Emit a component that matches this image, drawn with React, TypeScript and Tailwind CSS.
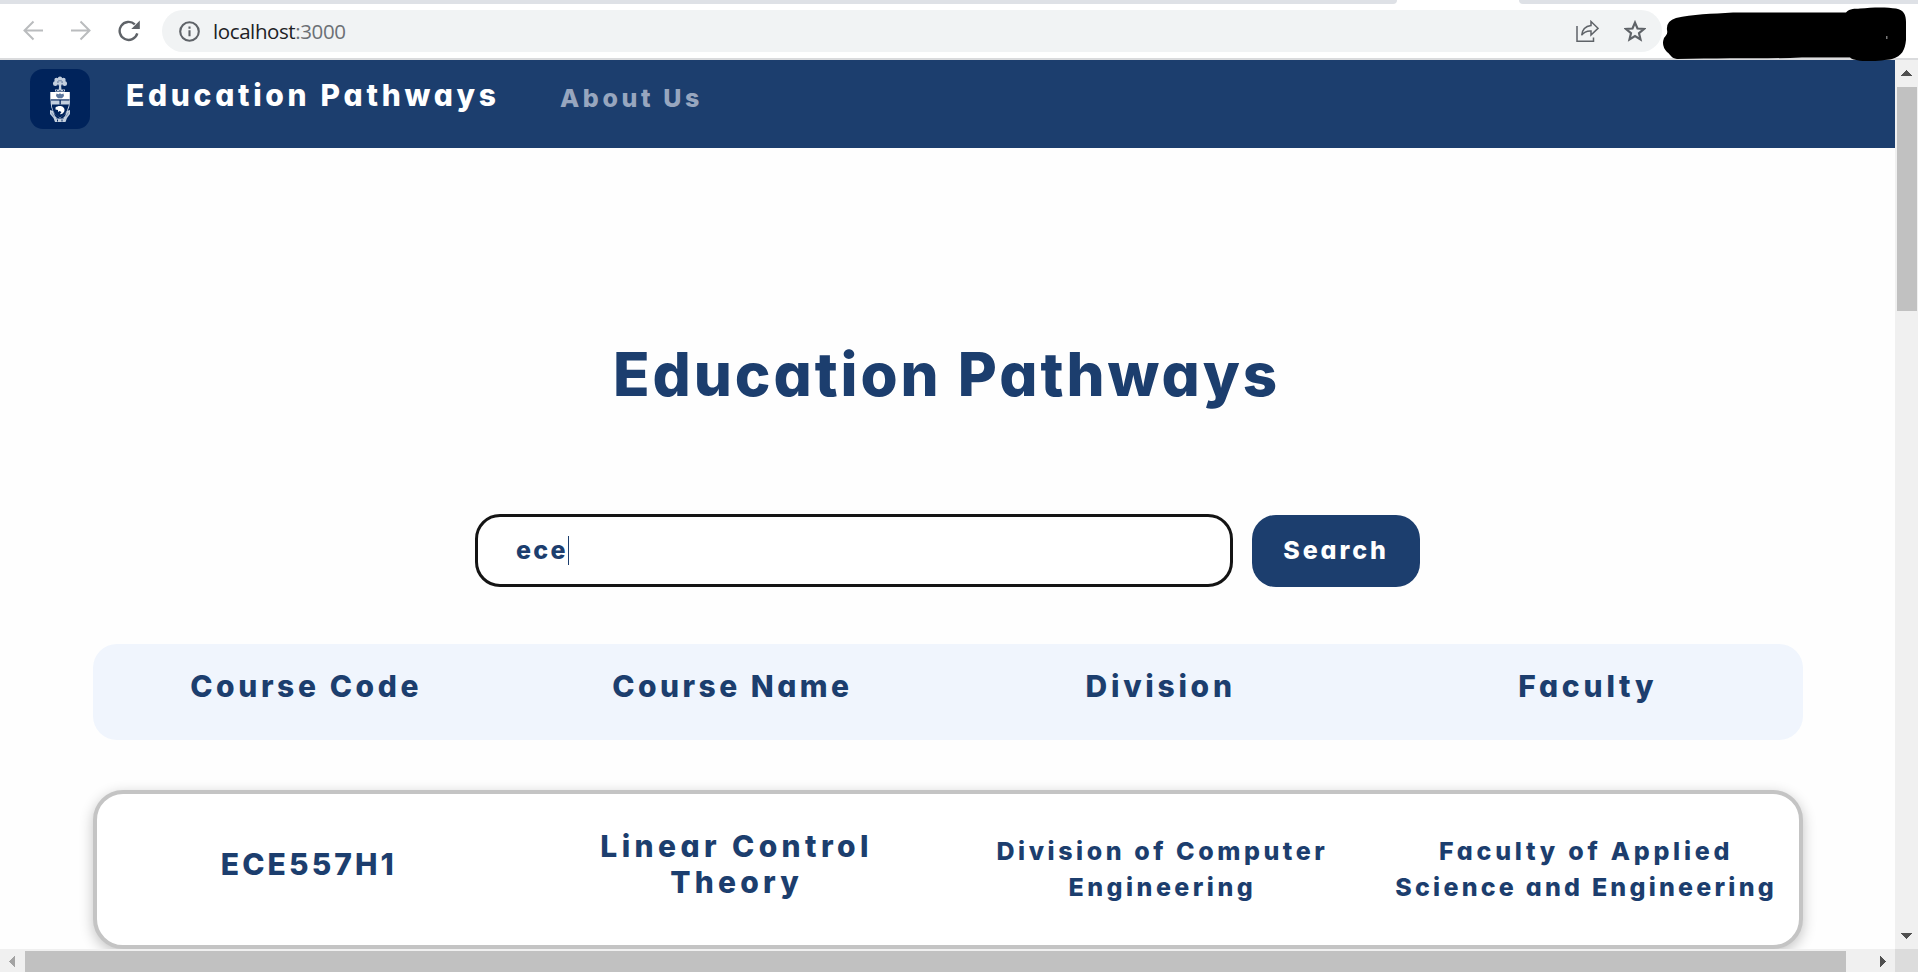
import type { ReactNode } from 'react';

const title = "font-[Inter,sans-serif] font-extrabold [font-feature-settings:'cv11'] whitespace-nowrap";

function BrowserBar() {
  return (
    <div className="relative h-[60px] shrink-0 border-b-2 border-[#dadbdd] bg-white">
      <div className="flex h-1 justify-between">
        <div className="w-[1397px] rounded-br-[6px] bg-[#dee1e6]" />
        <div className="w-[399px] rounded-bl-[6px] bg-[#dee1e6]" />
      </div>
      <div className="mt-[6px] flex h-[42px] items-center">
        <svg className="ml-[22px] h-[22px] w-[22px]" viewBox="0 0 22 22" fill="none" stroke="#babcbe" strokeWidth="2">
          <path d="M21 10.5H2.5M11.5 1.5l-9 9 9 9" />
        </svg>
        <svg className="ml-[26px] h-[22px] w-[22px]" viewBox="0 0 22 22" fill="none" stroke="#babcbe" strokeWidth="2">
          <path d="M1 10.500h18.500M10.500 1.500l9 9-9 9" />
        </svg>
        <svg className="ml-[26px] h-[22px] w-[22px]" viewBox="0 0 22 22" fill="none" stroke="#5f6368" strokeWidth="2.400">
          <path d="M19.300 13.400A9 9 0 1 1 16.800 4.300" />
          <path d="M21.800 0.500v8.500h-8.500z" fill="#5f6368" stroke="none" />
        </svg>
        <div className="ml-[22px] flex h-[42px] w-[1500px] items-center rounded-full bg-[#f1f3f4] pl-[17px]">
          <svg className="h-[21px] w-[21px]" viewBox="0 0 21 21" fill="none" stroke="#5f6368" strokeWidth="2.100">
            <circle cx="10.500" cy="10.500" r="9.300" />
            <path d="M10.500 9.200v6M10.500 5.500v2.200" />
          </svg>
          <span className="ml-[13px] font-['Open_Sans',sans-serif] text-[20.500px] leading-[30px] tracking-[-0.400px] text-[#202124]">
            localhost<span className="text-[#6c7075]">:3000</span>
          </span>
          <svg className="mr-[25px] ml-auto h-[23px] w-[23px]" viewBox="0 0 23 23" fill="none" stroke="#5f6368" strokeWidth="1.500">
            <path d="M1 6v15.200h16.500V17.500" />
            <path d="M15 1.500l7 6.800-7 6.700v-4c-4-.2-7 .8-9.300 4.200C6.200 9.800 9.500 6.200 15 5.500z" />
          </svg>
          <svg className="mr-4 h-[22px] w-[22px]" viewBox="0 0 22 22" fill="none" stroke="#5f6368" strokeWidth="2.200">
            <path d="M11 2.600l2.500 5.900 6.400.5-4.900 4.200 1.500 6.200L11 16.100l-5.500 3.300L7 13.200 2.100 9l6.400-.5z" />
          </svg>
        </div>
      </div>
      <svg className="absolute top-[6px] left-[1662px] z-10 h-[56px] w-[246px]" viewBox="0 0 246 56">
        <path d="M5 24Q4 15 14 12C30 8 50 8 71 6.500H184C188 2 193 3 198 2.500C211 1 226 1 234 2.500C242 4 244 9 244 16V34C243 44 240 50 230 53C220 55 194 57 188 51.500H140C100 53 60 52 15 53C9 52 9 49 5 46Q-1 40 2 32C4 29 6 28 5 24Z" fill="#000" />
        <path d="M224 30h1.500v3h-1.500z" fill="#777" />
      </svg>
    </div>
  );
}

function Crest() {
  return (
    <svg className="h-[60px] w-[60px] rounded-[13px] bg-[#00235b]" viewBox="0 0 60 60">
      <g fill="#c3cfde">
        <circle cx="25.500" cy="14.500" r="2.500" />
        <circle cx="26.500" cy="11" r="2.200" />
        <circle cx="30" cy="9.800" r="2.200" />
        <circle cx="33.500" cy="11" r="2.200" />
        <circle cx="34.500" cy="14.500" r="2.500" />
        <circle cx="30" cy="14" r="2.600" />
        <path d="M29.200 15h1.800l.5 6h-2.800zM25 20.500h10v2h-10z" />
        <path d="M20.500 30.500h19.500c0 6-1 10-4 13.500l-6 5-6-5c-2.500-3.500-3.500-7.500-3.500-13.500z" />
        <path d="M20 41l3 1 2 5 3 3h4l3-3 2-5 3-1v4l-3 4-1.500 4h-10.500L23.500 49 20 45z" />
      </g>
      <path d="M28 12.500v1M32 12.500v1M27 16.500l1-1M33 16.500l-1-1M30 11.500v.8" stroke="#00235b" strokeWidth=".9" />
      <path d="M20.300 23h19.500v7.500H20.300z" fill="#fff" />
      <path d="M26.500 24.500l2 .8 1.500-1 1.500 1 2-.8.500 2.500-2 2.300h-4l-2-2.300z" fill="#5c769c" />
      <g fill="#00235b">
        <path d="M22 35.500h17l-.7 2c-1.500 6-4 9-8.300 11-4.300-2-6.800-5-8-11z" />
        <path d="M21 30.500h18.500v1H21zM29.500 31h1.300v4.500h-1.300z" />
        <path d="M27 50.500h1v2h-1zM31.500 50.500h1v2h-1z" />
        <circle cx="26.500" cy="21.500" r=".6" />
        <circle cx="30" cy="21.500" r=".6" />
        <circle cx="33.500" cy="21.500" r=".6" />
      </g>
      <path d="M25.500 38.500c2-2 6-2 7.500-.5 2 1.500 2 4 .5 5.500-1 1.500-2.500 2-3.500 1.500l1.500-2-2-1-1.500 1v-2l-2.500-.5z" fill="#fff" />
      <path d="M21.500 43.500l2.500 4M38.500 43.500l-2.500 4M26 49.500h8" stroke="#7088a9" strokeWidth=".8" />
    </svg>
  );
}

function Cell({ children, className = '' }: { children: ReactNode; className?: string }) {
  return <div className={`flex flex-1 flex-col items-center leading-9 ${className}`}>{children}</div>;
}

function VerticalScrollbar() {
  return (
    <div className="flex w-[23px] shrink-0 flex-col items-center bg-[#f0f0f0]">
      <svg className="mt-[10px] h-[6px] w-[11px]" viewBox="0 0 11 6" shapeRendering="crispEdges"><path d="M5.500 0L11 6H0z" fill="#505050" /></svg>
      <div className="mt-[11px] h-[224px] w-[20px] bg-[#c1c1c1]" />
      <svg className="mt-auto mb-[10px] h-[6px] w-[11px]" viewBox="0 0 11 6" shapeRendering="crispEdges"><path d="M5.500 6L11 0H0z" fill="#505050" /></svg>
    </div>
  );
}

function HorizontalScrollbar() {
  return (
    <div className="flex h-[23px] shrink-0 items-center bg-[#f0f0f0]">
      <svg className="mt-[2px] ml-[9px] h-[11px] w-[6px]" viewBox="0 0 6 11" shapeRendering="crispEdges"><path d="M0 5.500L6 0V11z" fill="#a3a3a3" /></svg>
      <div className="mt-[2px] ml-[10px] h-[21px] w-[1821px] bg-[#c1c1c1]" />
      <svg className="mt-[2px] ml-[34px] h-[11px] w-[6px]" viewBox="0 0 6 11" shapeRendering="crispEdges"><path d="M6 5.500L0 0V11z" fill="#505050" /></svg>
      <div className="ml-auto h-full w-[23px] bg-[#dcdcdc]" />
    </div>
  );
}

export default function App() {
  return (
    <div className="flex h-[972px] w-[1918px] flex-col overflow-hidden bg-white text-[#1c3e6e]">
      <BrowserBar />
      <div className="flex min-h-0 flex-1">
        <div className="min-w-0 flex-1 overflow-hidden bg-[#fefefe]">
          <nav className="flex h-[88px] items-start bg-[#1c3e6e] pl-[30px]">
            <div className="mt-[9px]"><Crest /></div>
            <span className={`${title} mt-[17px] ml-[36px] w-[434px] text-[30px] leading-9 tracking-[3.700px] text-white`}>Education Pathways</span>
            <span className={`${title} mt-5 text-[25px] leading-9 tracking-[3.600px] text-[#97a6bf]`}>About Us</span>
          </nav>

          <h1 className={`${title} mt-[190px] pl-[613px] text-[60px] leading-[72px] tracking-[2.950px]`}>Education Pathways</h1>

          <div className="mt-[103px] flex h-[74px] items-center pl-[475px]">
            <div className="flex h-[73px] w-[758px] items-center rounded-[25px] border-3 border-[#141414] bg-white pl-[38px]">
              <span className={`${title} w-[52px] text-[25px] leading-9 tracking-[2.300px]`}>ece</span>
              <span className="h-[29px] w-px bg-[#1c3e6e]" />
            </div>
            <button className={`${title} mt-px ml-[19px] h-[72px] w-[168px] rounded-[24px] bg-[#1c3e6e] pb-[2px] text-[25px] leading-9 tracking-[2.900px] text-white`}>Search</button>
          </div>

          <div className={`${title} mt-[57px] ml-[93px] flex h-24 w-[1710px] rounded-[24px] bg-[#f0f5fd] pt-6 text-[30px]`}>
            <Cell className="tracking-[3.600px]">Course Code</Cell>
            <Cell className="pr-[2px] tracking-[3.450px]">Course Name</Cell>
            <Cell className="pr-[1px] tracking-[3.700px]">Division</Cell>
            <Cell className="pr-[2px] tracking-[3.800px]">Faculty</Cell>
          </div>

          <div className={`${title} mt-[50px] ml-[93px] flex h-[159px] w-[1710px] items-center rounded-[30px] border-4 border-[#c4c4c4] bg-white shadow-[0_4px_14px_rgba(0,0,0,0.24)]`}>
            <Cell className="pr-1 pb-[11px] text-[30px] tracking-[3.100px]">ECE557H1</Cell>
            <Cell className="pr-[2px] pb-[11px] text-[30px]">
              <span className="tracking-[4.400px]">Linear Control</span>
              <span className="tracking-[4.200px]">Theory</span>
            </Cell>
            <Cell className="pb-[1px] text-[25px]">
              <span className="tracking-[3.550px]">Division of Computer</span>
              <span className="tracking-[3.450px]">Engineering</span>
            </Cell>
            <Cell className="pb-[1px] pr-[1px] text-[25px]">
              <span className="tracking-[3.750px]">Faculty of Applied</span>
              <span className="tracking-[3.220px]">Science and Engineering</span>
            </Cell>
          </div>
        </div>
        <VerticalScrollbar />
      </div>
      <HorizontalScrollbar />
    </div>
  );
}
